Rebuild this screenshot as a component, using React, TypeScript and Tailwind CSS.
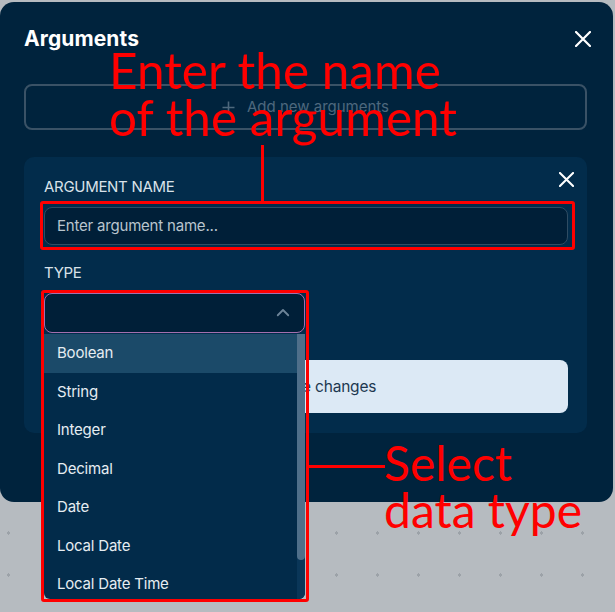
import React from "react";

const types = ["Boolean", "String", "Integer", "Decimal", "Date", "Local Date", "Local Date Time"];

function Cross({ size, className }: { size: number; className?: string }) {
	return (
		<svg width={size} height={size} viewBox="0 0 16 16" className={className}>
			<path d="M1 1 L15 15 M15 1 L1 15" stroke="currentColor" strokeWidth="2.2" strokeLinecap="round" />
		</svg>
	);
}

export default function App() {
	return (
		<div
			className="relative w-[615px] h-[612px] overflow-hidden bg-[#b6bbc0] bg-[radial-gradient(circle,#9ca2a8_1.6px,transparent_1.8px)] bg-[length:41px_42px] bg-[position:-12px_8px] pt-[2px] font-['Inter',sans-serif]"
		>
			{/* modal */}
			<div className="w-[613px] h-[500px] rounded-[14px] bg-[#00233d] pl-6 pr-[26px] pt-[22px]">
				<div className="flex items-center justify-between h-[30px]">
					<h1 className="text-[21px] font-bold text-white tracking-[0.1px]">Arguments</h1>
					<button className="text-white -mr-[4px]">
						<Cross size={16} />
					</button>
				</div>

				<button className="mt-[30px] w-full h-[46px] rounded-[8px] border-2 border-[#3a5266] flex items-center justify-center gap-3 text-[15px] text-[#4d687d]">
					<svg width="13" height="13" viewBox="0 0 13 13">
						<path d="M6.5 0.5 V12.5 M0.5 6.5 H12.5" stroke="currentColor" strokeWidth="1.6" />
					</svg>
					Add new arguments
				</button>

				{/* argument card */}
				<div className="relative mt-[27px] h-[276px] rounded-[10px] bg-[#022c4b] pl-5 pr-[19px] pt-5">
					<button className="absolute right-[13px] top-[15px] text-white">
						<Cross size={15} />
					</button>
					<div className="text-[15px] leading-5 text-[#d9e2e9] tracking-[-0.3px]">ARGUMENT NAME</div>
					<div className="mt-[10px] h-[38px] rounded-[8px] border border-[#2f4c63] bg-[#001f38] px-3 flex items-center text-[15px] text-[#b9c5ce] tracking-[-0.2px]">
						Enter argument name...
					</div>

					<div className="mt-[18px] text-[15px] leading-5 text-[#d9e2e9] tracking-[-0.3px]">TYPE</div>
					<div className="relative mt-[10px] w-[261px]">
						<div className="h-[40px] rounded-[8px] border border-[#a46fae] bg-[#001f38] flex items-center justify-end pr-[12px]">
							<svg width="18" height="18" viewBox="0 0 24 24" fill="none" stroke="#6d8599" strokeWidth="2.4" strokeLinecap="round" strokeLinejoin="round">
								<path d="m5 15 7-7 7 7" />
							</svg>
						</div>
						{/* open dropdown */}
						<div className="absolute left-0 top-[41px] z-10 w-[261px] h-[265px] overflow-hidden rounded-b-[6px] bg-[#022b4a] flex">
							<div className="flex-1 flex flex-col">
								{types.map((t, i) => (
									<div
										key={t}
										className={
											"h-[38.5px] shrink-0 flex items-center pl-[13px] text-[15px] text-[#e6edf2] tracking-[-0.2px] " +
											(i === 0 ? "bg-[#1b4a69]" : "")
										}
									>
										{t}
									</div>
								))}
							</div>
							<div className="w-[8px] h-full bg-[#0a3658] flex flex-col">
								<div className="h-[226px] rounded-b-[4px] bg-[#4f6f8a]" />
							</div>
						</div>
					</div>

					<button className="mt-[27px] w-full h-[53px] rounded-[8px] bg-[#dce9f5] flex items-center justify-center pl-10 text-[15.5px] text-[#1d3850] tracking-[-0.2px]">
						Save changes
					</button>
				</div>
			</div>

			{/* red annotations */}
			<div className="absolute left-[109px] top-[47px] font-['Lato',sans-serif] text-[49.5px] leading-[47px] text-[#ff0000] whitespace-nowrap">
				Enter the name
				<br />
				of the argument
			</div>
			<div className="absolute left-[261px] top-[145px] w-[3px] h-[58px] bg-[#ff0000]" />
			<div className="absolute left-[40px] top-[201px] w-[535px] h-[49px] rounded-[3px] border-[3px] border-[#ff0000]" />
			<div className="absolute left-[41px] top-[290px] z-20 w-[268px] h-[312px] rounded-[3px] border-[3px] border-[#ff0000]" />
			<div className="absolute left-[308px] top-[465px] w-[77px] h-[3px] bg-[#ff0000]" />
			<div className="absolute left-[384px] top-[439px] font-['Lato',sans-serif] text-[48px] leading-[47px] text-[#ff0000] whitespace-nowrap">
				Select
				<br />
				data type
			</div>
		</div>
	);
}
